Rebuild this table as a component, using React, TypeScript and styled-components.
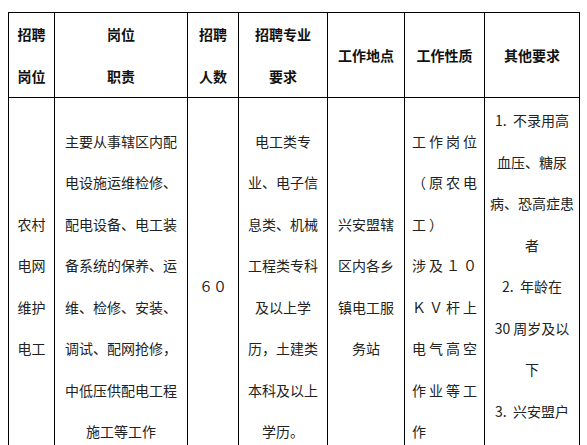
import React from "react";
import styled, { createGlobalStyle } from "styled-components";

const GlobalStyle = createGlobalStyle`
  html, body {
    margin: 0;
    padding: 0;
    background: #ffffff;
  }
  body {
    font-family: "Noto Sans CJK SC", "Noto Sans", sans-serif;
    color: #222;
  }
`;

const Page = styled.div`
  padding: 12px 0 0 8px;
`;

const Table = styled.table`
  border-collapse: collapse;
  table-layout: fixed;
  width: 572px;
`;

const HeadCell = styled.th`
  border: 1px solid #000;
  padding: 0;
  font-size: 14px;
  font-weight: 700;
  line-height: 42px;
  color: #111;
  text-align: center;
  vertical-align: middle;
`;

const BodyCell = styled.td<{ $align?: "center" | "left"; $spacing?: number }>`
  border: 1px solid #000;
  padding: 2px 0 2px ${(p) => (p.$align === "left" ? "7px" : "0")};
  font-size: 14px;
  line-height: 41.5px;
  color: #222;
  text-align: ${(p) => p.$align ?? "center"};
  letter-spacing: ${(p) => p.$spacing ?? 0}px;
  vertical-align: middle;
`;

const Line = styled.span`
  display: block;
  white-space: pre;
`;

const widths = [46, 133, 51, 89, 77, 80, 95];

type Col = { lines: string[]; align?: "center" | "left"; spacing?: number };

const headers: string[][] = [
  ["招聘", "岗位"],
  ["岗位", "职责"],
  ["招聘", "人数"],
  ["招聘专业", "要求"],
  ["工作地点"],
  ["工作性质"],
  ["其他要求"],
];

const body: Col[] = [
  { lines: ["农村", "电网", "维护", "电工"] },
  {
    lines: [
      "主要从事辖区内配",
      "电设施运维检修、",
      "配电设备、电工装",
      "备系统的保养、运",
      "维、检修、安装、",
      "调试、配网抢修，",
      "中低压供配电工程",
      "施工等工作",
    ],
  },
  { lines: ["６０"] },
  {
    lines: [
      "电工类专",
      "业、电子信",
      "息类、机械",
      "工程类专科",
      "及以上学",
      "历，土建类",
      "本科及以上",
      "学历。",
    ],
  },
  { lines: ["兴安盟辖", "区内各乡", "镇电工服", "务站"] },
  {
    lines: ["工作岗位", "（原农电", "工）", "涉及１０", "ＫＶ杆上", "电气高空", "作业等工", "作"],
    align: "left",
    spacing: 3,
  },
  {
    lines: [
      "1.  不录用高",
      "血压、糖尿",
      "病、恐高症患",
      "者",
      "2.  年龄在",
      "30 周岁及以",
      "下",
      "3.  兴安盟户",
      "籍",
    ],
  },
];

export default function App() {
  return (
    <>
      <GlobalStyle />
      <Page>
        <Table>
          <colgroup>
            {widths.map((w, i) => (
              <col key={i} style={{ width: w }} />
            ))}
          </colgroup>
          <thead>
            <tr>
              {headers.map((h, i) => (
                <HeadCell key={i}>
                  {h.map((t, j) => (
                    <Line key={j}>{t}</Line>
                  ))}
                </HeadCell>
              ))}
            </tr>
          </thead>
          <tbody>
            <tr>
              {body.map((c, i) => (
                <BodyCell key={i} $align={c.align} $spacing={c.spacing}>
                  {c.lines.map((t, j) => (
                    <Line key={j}>{t}</Line>
                  ))}
                </BodyCell>
              ))}
            </tr>
          </tbody>
        </Table>
      </Page>
    </>
  );
}
